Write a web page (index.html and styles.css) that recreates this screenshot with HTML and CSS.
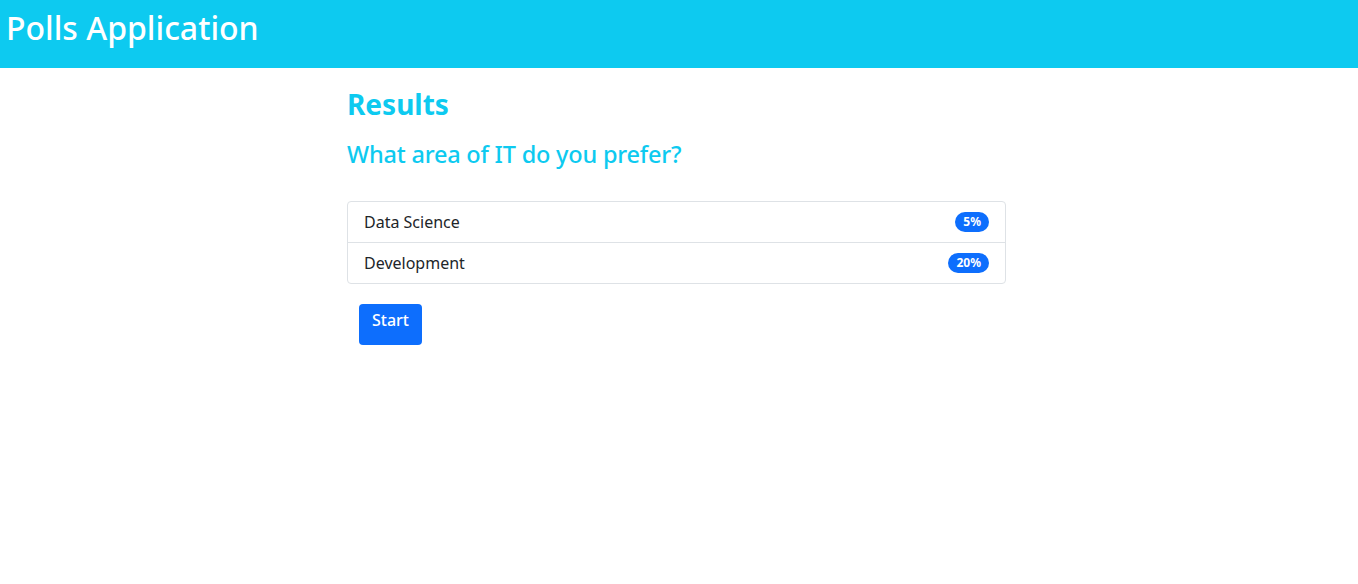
FILE: index.html
```html
<!DOCTYPE html>
<html lang="en">
<head>
<meta charset="utf-8">
<title>Polls Application</title>
<link rel="stylesheet" href="styles.css">
</head>
<body>
<header class="navbar">
  <h1 class="brand">Polls Application</h1>
</header>
<main class="content">
  <h2 class="results-title">Results</h2>
  <h3 class="question">What area of IT do you prefer?</h3>
  <ul class="list">
    <li class="list-item"><span>Data Science</span><span class="badge">5%</span></li>
    <li class="list-item"><span>Development</span><span class="badge">20%</span></li>
  </ul>
  <div class="actions">
    <button class="btn" type="button">Start</button>
  </div>
</main>
</body>
</html>
```

FILE: styles.css
```css
* { box-sizing: border-box; }
html, body { margin: 0; padding: 0; }
body {
  font-family: "Noto Sans", "Open Sans", sans-serif;
  color: #212529;
  background: #fff;
  font-size: 16px;
  line-height: 1.5;
}
.navbar {
  background: #0dcaf0;
  height: 68px;
  display: flex;
  align-items: flex-start;
  padding: 9px 6px 0;
}
.brand {
  margin: 0;
  color: #fff;
  font-size: 32px;
  font-weight: 500;
  line-height: 1.2;
}
.content {
  width: 659px;
  margin-left: 347px;
  padding-top: 20px;
}
.results-title {
  margin: 0;
  color: #0dcaf0;
  font-size: 28px;
  font-weight: 700;
  line-height: 1.2;
}
.question {
  margin: 18px 0 0;
  color: #0dcaf0;
  font-size: 23.5px;
  font-weight: 500;
  line-height: 1.2;
  letter-spacing: -0.2px;
}
.list {
  list-style: none;
  margin: 33px 0 0;
  padding: 0;
  border: 1px solid #dee2e6;
  border-radius: 4px;
}
.list-item {
  display: flex;
  justify-content: space-between;
  align-items: center;
  padding: 8px 16px;
  height: 40px;
}
.list-item + .list-item { border-top: 1px solid #dee2e6; height: 41px; }
.badge {
  background: #0d6efd;
  color: #fff;
  font-size: 12px;
  font-weight: 700;
  line-height: 1;
  padding: 4px 8px;
  border-radius: 10px;
}
.actions { padding: 20px 12px 0; }
.btn {
  background: #0d6efd;
  color: #fff;
  border: none;
  border-radius: 4px;
  font-family: inherit;
  font-size: 16px;
  font-weight: 500;
  height: 41px;
  padding: 0 13px 8px;
  line-height: 1.5;
}
```
